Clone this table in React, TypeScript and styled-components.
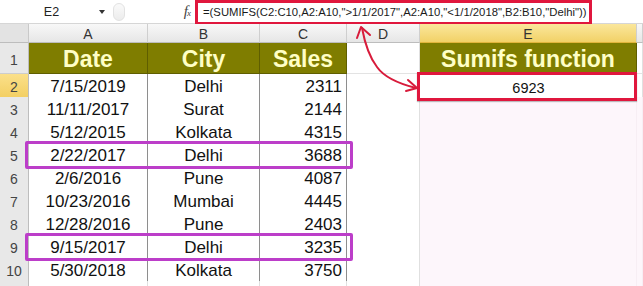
import React from 'react';
import styled, { createGlobalStyle } from 'styled-components';

const GlobalStyle = createGlobalStyle`
    html, body {
        margin: 0;
        padding: 0;
        background: #fff;
    }
    body {
        font-family: "Liberation Sans", Arial, sans-serif;
        overflow: hidden;
    }
`;

const Page = styled.div`
    position: relative;
    width: 643px;
    height: 286px;
    overflow: hidden;
    background: #fff;
`;

const FormulaBar = styled.div`
    display: flex;
    align-items: center;
    height: 24px;
    box-sizing: border-box;
    border-bottom: 1px solid #d6d6d6;
    background: #fff;
`;

const NameBox = styled.div`
    display: flex;
    align-items: center;
    width: 125px;
    height: 100%;
    box-sizing: border-box;
    font-size: 12.5px;
    color: #222;
`;

const NameText = styled.span`
    flex: 1;
    text-align: center;
    padding-left: 4px;
`;

const DropArrow = styled.span`
    width: 0;
    height: 0;
    margin-right: 6px;
    border-left: 3.5px solid transparent;
    border-right: 3.5px solid transparent;
    border-top: 4px solid #333;
`;

const Splitter = styled.div`
    width: 10px;
    height: 16px;
    margin-left: 2px;
    border-radius: 8px;
    border: 1px solid #e2e2e2;
    background: linear-gradient(#fafafa, #ececec);
`;

const FxIcon = styled.span`
    margin-left: auto;
    margin-right: 5px;
    font-family: "Liberation Serif", "Times New Roman", serif;
    font-style: italic;
    font-size: 15px;
    color: #444;
    letter-spacing: -1px;

    small {
        font-size: 9px;
    }
`;

const FormulaInput = styled.div`
    width: 397px;
    height: 25px;
    margin-top: 1px;
    margin-right: 51px;
    box-sizing: border-box;
    border: 3px solid #e0173d;
    padding-left: 5px;
    display: flex;
    align-items: center;
    font-size: 11.3px;
    color: #1a1a1a;
    white-space: nowrap;
    overflow: hidden;
    background: #fff;
`;

const Sheet = styled.div`
    display: flex;
    flex-direction: column;
`;

const Row = styled.div<{ $height: number; $marked?: boolean }>`
    position: relative;
    display: grid;
    grid-template-columns: 29px 119px 112px 87px 73px 217px 6px;
    height: ${(p) => p.$height}px;
    flex-shrink: 0;

    ${(p) =>
        p.$marked &&
        `
        &::after {
            content: '';
            position: absolute;
            z-index: 2;
            left: 25px;
            width: 322px;
            top: -2px;
            bottom: -3px;
            border: 3px solid #bc3ec9;
            border-radius: 2px;
            pointer-events: none;
        }
    `}
`;

const Corner = styled.div`
    background: #e3e3e3;
    border-right: 1px solid #c9c9c9;
    border-bottom: 1px solid #bdbdbd;
`;

const ColHead = styled.div<{ $selected?: boolean }>`
    display: flex;
    align-items: center;
    justify-content: center;
    box-sizing: border-box;
    padding-top: 1px;
    font-size: 14px;
    color: #333;
    background: ${(p) => (p.$selected ? 'linear-gradient(#fbe79c, #f2d167)' : 'linear-gradient(#f8f8f8, #e6e6e6)')};
    border-right: 1px solid #cfcfcf;
    border-bottom: 1px solid ${(p) => (p.$selected ? '#e2b53c' : '#bdbdbd')};
`;

const RowHead = styled.div<{ $selected?: boolean }>`
    display: flex;
    align-items: center;
    justify-content: center;
    box-sizing: border-box;
    padding-top: 3px;
    font-size: 14px;
    color: #444;
    background: ${(p) => (p.$selected ? 'linear-gradient(#fbe08a, #f3cf63)' : '#e8e8e8')};
    border-right: 1px solid #bdbdbd;
    border-bottom: 1px solid #cdcdcd;
`;

const HeadCell = styled.div`
    display: flex;
    align-items: center;
    justify-content: center;
    box-sizing: border-box;
    padding-top: 2px;
    background: #7f7d00;
    color: #ffffc6;
    font-weight: bold;
    font-size: 23px;
    white-space: nowrap;
    border-right: 1px solid #5f5e00;
    border-bottom: 1px solid #5f5e00;
`;

const DataCell = styled.div<{ $align: 'center' | 'right' }>`
    display: flex;
    align-items: center;
    justify-content: ${(p) => (p.$align === 'right' ? 'flex-end' : 'center')};
    box-sizing: border-box;
    padding: 3px 4px 0 4px;
    background: #fff;
    color: #111;
    font-size: 17px;
    white-space: nowrap;
    border-right: 1px solid #8e8e8e;
    border-bottom: 1px solid #b3b3b3;
`;

const EmptyCell = styled.div<{ $tint?: boolean }>`
    background: ${(p) => (p.$tint ? '#fdf6fb' : '#fff')};
    border-right: 1px solid ${(p) => (p.$tint ? '#f7eef4' : '#e0e0e0')};
    border-bottom: 1px solid ${(p) => (p.$tint ? '#f7eef4' : '#e3e3e3')};
`;

const ResultCell = styled.div`
    position: relative;
    z-index: 3;
    display: flex;
    align-items: center;
    justify-content: center;
    padding-top: 3px;
    background: #fff;
    font-size: 14.5px;
    color: #111;

    &::after {
        content: '';
        position: absolute;
        top: -2px;
        left: -3px;
        right: 0;
        bottom: -3px;
        border: 3px solid #e0173d;
        box-shadow: 0 1px 1px rgba(0, 0, 0, 0.25);
    }
`;

const Arrow = styled.svg`
    position: absolute;
    top: 0;
    left: 0;
    z-index: 5;
    pointer-events: none;
`;

const rows = [
    ['7/15/2019', 'Delhi', '2311'],
    ['11/11/2017', 'Surat', '2144'],
    ['5/12/2015', 'Kolkata', '4315'],
    ['2/22/2017', 'Delhi', '3688'],
    ['2/6/2016', 'Pune', '4087'],
    ['10/23/2016', 'Mumbai', '4445'],
    ['12/28/2016', 'Pune', '2403'],
    ['9/15/2017', 'Delhi', '3235'],
    ['5/30/2018', 'Kolkata', '3750'],
];

// rows where the sum criteria match (2017 + Delhi)
const marked = ['2/22/2017', '9/15/2017'];

const formula = '=(SUMIFS(C2:C10,A2:A10,">1/1/2017",A2:A10,"<1/1/2018",B2:B10,"Delhi"))';

export default function App() {
    return (
        <Page>
            <GlobalStyle />
            <FormulaBar>
                <NameBox>
                    <NameText>E2</NameText>
                    <DropArrow />
                    <Splitter />
                </NameBox>
                <FxIcon>
                    f<small>x</small>
                </FxIcon>
                <FormulaInput>{formula}</FormulaInput>
            </FormulaBar>

            <Sheet>
                <Row $height={19}>
                    <Corner />
                    {['A', 'B', 'C', 'D', 'E', ''].map((c, i) => (
                        <ColHead key={i} $selected={c === 'E'}>
                            {c}
                        </ColHead>
                    ))}
                </Row>

                <Row $height={31}>
                    <RowHead>1</RowHead>
                    <HeadCell>Date</HeadCell>
                    <HeadCell>City</HeadCell>
                    <HeadCell>Sales</HeadCell>
                    <EmptyCell />
                    <HeadCell>Sumifs function</HeadCell>
                    <EmptyCell />
                </Row>

                {rows.map((r, i) => (
                    <Row key={i} $height={23} $marked={marked.includes(r[0])}>
                        <RowHead $selected={i === 0}>{i + 2}</RowHead>
                        <DataCell $align="center">{r[0]}</DataCell>
                        <DataCell $align="center">{r[1]}</DataCell>
                        <DataCell $align="right">{r[2]}</DataCell>
                        <EmptyCell />
                        {i === 0 ? <ResultCell>6923</ResultCell> : <EmptyCell $tint />}
                        <EmptyCell $tint={i > 0} />
                    </Row>
                ))}

                <Row $height={23}>
                    <RowHead />
                    <EmptyCell />
                    <EmptyCell />
                    <EmptyCell />
                    <EmptyCell />
                    <EmptyCell $tint />
                    <EmptyCell $tint />
                </Row>
            </Sheet>

            <Arrow width="643" height="286" viewBox="0 0 643 286">
                <g fill="none" stroke="#d81b3b" strokeWidth="2" strokeLinecap="round" strokeLinejoin="round">
                    <path d="M362 28 C365 44, 370 58, 377 67 C384 77, 400 84, 416 88" />
                    <path d="M357 38 L361 27 L370 35" />
                    <path d="M408 80 L417 88 L406 91" />
                </g>
            </Arrow>
        </Page>
    );
}
